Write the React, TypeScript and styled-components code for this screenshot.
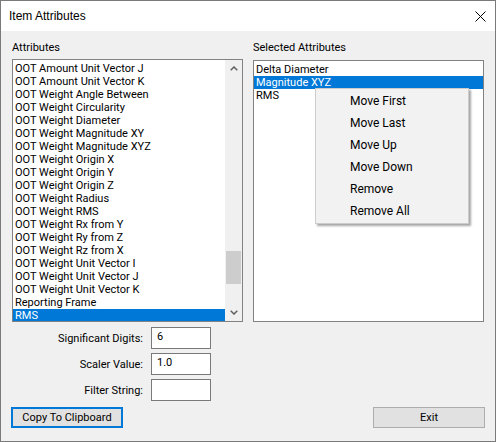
import React from 'react';
import styled, { createGlobalStyle } from 'styled-components';

const Global = createGlobalStyle`
  html, body { margin: 0; padding: 0; background: #ffffff; }
  * { box-sizing: border-box; }
`;

const Window = styled.div`
  position: relative;
  width: 496px;
  height: 442px;
  border: 1px solid #7a7a7a;
  background: #f0f0f0;
  display: flex;
  flex-direction: column;
  font-family: Roboto, "Liberation Sans", sans-serif;
  font-size: 11px;
  color: #000;
  overflow: hidden;
`;

const TitleBar = styled.div`
  height: 30px;
  flex: none;
  background: #ffffff;
  display: flex;
  align-items: center;
  justify-content: space-between;
  padding: 0 9px 0 8px;
  font-family: "Liberation Sans", sans-serif;
  font-size: 12px;
`;

const CloseIcon = () => (
  <svg width="11" height="11" viewBox="0 0 11 11">
    <path d="M0.5 0.5 L10.5 10.5 M10.5 0.5 L0.5 10.5" stroke="#000" strokeWidth="1" fill="none" />
  </svg>
);

const Body = styled.div`
  flex: 1;
  display: flex;
  flex-direction: column;
  padding: 10px 10px 0 10px;
`;

const Columns = styled.div`
  display: grid;
  grid-template-columns: 231px 231px;
  column-gap: 10px;
  padding-left: 1px;
`;

const Column = styled.div`
  display: flex;
  flex-direction: column;
`;

const Label = styled.div`
  height: 14px;
  line-height: 14px;
  white-space: nowrap;
`;

const ListBox = styled.div<{ $top: number; $h: number }>`
  position: relative;
  margin-top: ${p => p.$top}px;
  height: ${p => p.$h}px;
  border: 1px solid #828282;
  background: #ffffff;
  display: flex;
  overflow: hidden;
`;

const Items = styled.div`
  flex: 1;
  padding-top: 2px;
  overflow: hidden;
`;

const Item = styled.div<{ $sel?: boolean }>`
  height: 13px;
  line-height: 13px;
  padding-left: 2px;
  white-space: nowrap;
  background: ${p => (p.$sel ? '#0078d7' : 'transparent')};
  color: ${p => (p.$sel ? '#ffffff' : '#000000')};
`;

const ScrollBar = styled.div`
  width: 17px;
  flex: none;
  background: #f0f0f0;
  display: flex;
  flex-direction: column;
`;

const ScrollArrow = styled.div`
  height: 17px;
  display: flex;
  align-items: center;
  justify-content: center;
`;

const Track = styled.div`
  flex: 1;
  display: flex;
  flex-direction: column;
`;

const Thumb = styled.div<{ $offset: number; $size: number }>`
  margin-top: ${p => p.$offset}px;
  height: ${p => p.$size}px;
  margin-left: 1px;
  margin-right: 1px;
  background: #cdcdcd;
`;

const Chevron = ({ up }: { up?: boolean }) => (
  <svg width="8" height="5" viewBox="0 0 8 5">
    <polyline
      points={up ? '0.7,4.3 4,1 7.3,4.3' : '0.7,0.7 4,4 7.3,0.7'}
      stroke="#606060"
      strokeWidth="1.5"
      fill="none"
    />
  </svg>
);

const Form = styled.div`
  margin-top: 5px;
  display: grid;
  grid-template-columns: 131px 60px;
  column-gap: 8px;
  row-gap: 4px;
  padding-left: 1px;
`;

const FieldLabel = styled.div`
  justify-self: end;
  align-self: center;
  white-space: nowrap;
  padding-top: 1px;
`;

const TextBox = styled.div`
  height: 22px;
  border: 1px solid #7a7a7a;
  background: #ffffff;
  padding: 2px 0 0 5px;
  line-height: 14px;
`;

const ButtonRow = styled.div`
  margin-top: 6px;
  display: flex;
  justify-content: space-between;
`;

const Button = styled.div<{ $focused?: boolean }>`
  width: 112px;
  height: 21px;
  background: #e1e1e1;
  border: ${p => (p.$focused ? '2px solid #0078d7' : '1px solid #adadad')};
  display: flex;
  align-items: center;
  justify-content: center;
  white-space: nowrap;
`;

const Menu = styled.div`
  position: absolute;
  left: 314px;
  top: 87px;
  width: 154px;
  padding: 1px 0;
  background: #f2f2f2;
  border: 1px solid #cccccc;
  box-shadow: 2px 2px 2px rgba(0, 0, 0, 0.35);
  font-size: 12px;
`;

const MenuItem = styled.div`
  height: 22px;
  line-height: 22px;
  padding-left: 34px;
  white-space: nowrap;
`;

const attributes = [
  'OOT Amount Unit Vector J',
  'OOT Amount Unit Vector K',
  'OOT Weight Angle Between',
  'OOT Weight Circularity',
  'OOT Weight Diameter',
  'OOT Weight Magnitude XY',
  'OOT Weight Magnitude XYZ',
  'OOT Weight Origin X',
  'OOT Weight Origin Y',
  'OOT Weight Origin Z',
  'OOT Weight Radius',
  'OOT Weight RMS',
  'OOT Weight Rx from Y',
  'OOT Weight Ry from Z',
  'OOT Weight Rz from X',
  'OOT Weight Unit Vector I',
  'OOT Weight Unit Vector J',
  'OOT Weight Unit Vector K',
  'Reporting Frame',
  'RMS',
];

const selected = ['Delta Diameter', 'Magnitude XYZ', 'RMS'];

const menu = ['Move First', 'Move Last', 'Move Up', 'Move Down', 'Remove', 'Remove All'];

export default function App() {
  return (
    <>
      <Global />
      <Window>
        <TitleBar>
          <span>Item Attributes</span>
          <CloseIcon />
        </TitleBar>
        <Body>
          <Columns>
            <Column>
              <Label>Attributes</Label>
              <ListBox $top={4} $h={263}>
                <Items>
                  {attributes.map((a, i) => (
                    <Item key={i} $sel={i === attributes.length - 1}>{a}</Item>
                  ))}
                </Items>
                <ScrollBar>
                  <ScrollArrow><Chevron up /></ScrollArrow>
                  <Track>
                    <Thumb $offset={174} $size={33} />
                  </Track>
                  <ScrollArrow><Chevron /></ScrollArrow>
                </ScrollBar>
              </ListBox>
            </Column>
            <Column>
              <Label>Selected Attributes</Label>
              <ListBox $top={5} $h={262}>
                <Items>
                  {selected.map((a, i) => (
                    <Item key={i} $sel={i === 1}>{a}</Item>
                  ))}
                </Items>
              </ListBox>
            </Column>
          </Columns>
          <Form>
            <FieldLabel>Significant Digits:</FieldLabel>
            <TextBox>6</TextBox>
            <FieldLabel>Scaler Value:</FieldLabel>
            <TextBox>1.0</TextBox>
            <FieldLabel>Filter String:</FieldLabel>
            <TextBox />
          </Form>
          <ButtonRow>
            <Button $focused>Copy To Clipboard</Button>
            <Button>Exit</Button>
          </ButtonRow>
        </Body>
        <Menu>
          {menu.map(m => (
            <MenuItem key={m}>{m}</MenuItem>
          ))}
        </Menu>
      </Window>
    </>
  );
}
